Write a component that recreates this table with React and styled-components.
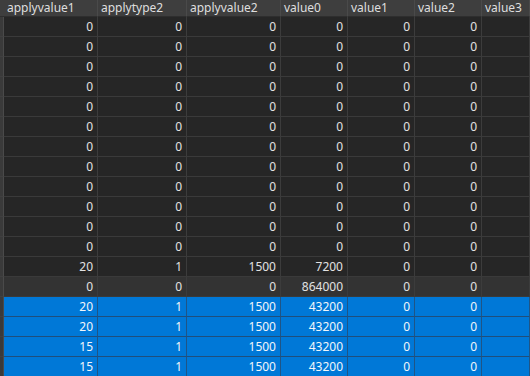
import React from 'react'
import styled, { createGlobalStyle } from 'styled-components'

const GlobalStyle = createGlobalStyle`
  html, body {
    margin: 0;
    padding: 0;
    background: #262626;
    overflow: hidden;
  }
  body {
    font-family: 'Noto Sans', 'Liberation Sans', sans-serif;
  }
`

const columns = ['applyvalue1', 'applytype2', 'applyvalue2', 'value0', 'value1', 'value2', 'value3']

const zeros = ['0', '0', '0', '0', '0', '0', '']

const rows = [
  ...Array.from({ length: 12 }, () => ({ cells: zeros })),
  { cells: ['20', '1', '1500', '7200', '0', '0', ''] },
  { cells: ['0', '0', '0', '864000', '0', '0', ''], hover: true },
  { cells: ['20', '1', '1500', '43200', '0', '0', ''], selected: true },
  { cells: ['20', '1', '1500', '43200', '0', '0', ''], selected: true },
  { cells: ['15', '1', '1500', '43200', '0', '0', ''], selected: true },
  { cells: ['15', '1', '1500', '43200', '0', '0', ''], selected: true },
]

const Grid = styled.div`
  display: grid;
  grid-template-columns: 4px 94px 89px 94px 67px 67px 67px 1fr;
  grid-auto-rows: 20px;
  grid-template-rows: 17px;
  width: 530px;
  height: 376px;
  overflow: hidden;
  font-size: 12px;
  color: #e4e4e4;
`

const HeadCell = styled.div`
  box-sizing: border-box;
  background: #3e3e3e;
  border-right: 1px solid #4a4a4a;
  border-bottom: 1px solid #2e2e2e;
  padding: 0 3px;
  line-height: 16px;
  color: #dedede;
  white-space: nowrap;
  overflow: hidden;
`

const RowHead = styled.div`
  box-sizing: border-box;
  background: #3a3a3a;
  border-right: 1px solid #4a4a4a;
  border-bottom: 1px solid #404040;
`

const Cell = styled.div`
  box-sizing: border-box;
  background: ${p => (p.$selected ? '#0078d7' : p.$hover ? '#333333' : '#262626')};
  border-right: 1px solid ${p => (p.$selected ? '#1f5586' : '#3c3c3c')};
  border-bottom: 1px solid ${p => (p.$selected ? '#1f4f7c' : '#3a3a3a')};
  padding: 0 4px;
  text-align: right;
  line-height: 19px;
  color: ${p => (p.$selected ? '#f2f6fa' : '#e2e2e2')};
  white-space: nowrap;
  overflow: hidden;
`

export default function App() {
  return (
    <>
      <GlobalStyle />
      <Grid>
        <HeadCell />
        {columns.map(c => (
          <HeadCell key={c}>{c}</HeadCell>
        ))}
        {rows.map((r, i) => (
          <React.Fragment key={i}>
            <RowHead />
            {r.cells.map((v, j) => (
              <Cell key={j} $selected={r.selected} $hover={r.hover}>
                {v}
              </Cell>
            ))}
          </React.Fragment>
        ))}
      </Grid>
    </>
  )
}
